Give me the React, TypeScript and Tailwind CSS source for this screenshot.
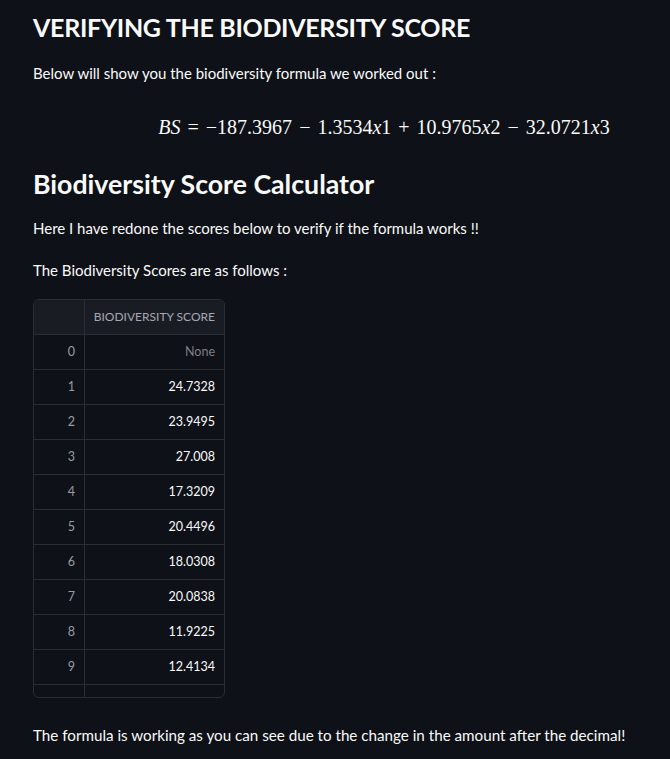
const scores: { idx: number; value: string }[] = [
  { idx: 0, value: 'None' },
  { idx: 1, value: '24.7328' },
  { idx: 2, value: '23.9495' },
  { idx: 3, value: '27.008' },
  { idx: 4, value: '17.3209' },
  { idx: 5, value: '20.4496' },
  { idx: 6, value: '18.0308' },
  { idx: 7, value: '20.0838' },
  { idx: 8, value: '11.9225' },
  { idx: 9, value: '12.4134' },
];

function Op({ children }: { children: string }) {
  return <span className="mx-[7px]">{children}</span>;
}

function Formula() {
  return (
    <div className="flex justify-center pl-[31px] text-[20px] leading-[28px] text-[#fafafa] font-['Liberation_Serif',serif]">
      <span className="whitespace-nowrap">
        <i>BS</i>
        <Op>=</Op>−187.3967<Op>−</Op>1.3534<i>x</i>1<Op>+</Op>10.9765<i>x</i>2<Op>−</Op>32.0721<i>x</i>3
      </span>
    </div>
  );
}

function ScoreTable() {
  return (
    <div className="w-[192px] rounded-md border border-[#2b2d35] overflow-hidden text-[12.5px]">
      <div className="flex h-[35px] bg-[#1a1c23] border-b border-[#2b2d35]">
        <div className="w-[51px] border-r border-[#2b2d35]" />
        <div className="flex-1 flex items-center justify-end pr-[9px] text-[12px] text-[#a3a8b4] whitespace-nowrap">
          BIODIVERSITY SCORE
        </div>
      </div>
      {scores.map((row) => (
        <div key={row.idx} className="flex h-[35px] border-b border-[#2b2d35]">
          <div className="w-[51px] border-r border-[#2b2d35] flex items-center justify-end pr-[9px] text-[#9a9ca3]">
            {row.idx}
          </div>
          <div
            className={
              'flex-1 flex items-center justify-end pr-[9px] ' +
              (row.value === 'None' ? 'text-[#7d7f86]' : 'text-[#fafafa]')
            }
          >
            {row.value}
          </div>
        </div>
      ))}
      <div className="flex h-[12px]">
        <div className="w-[51px] border-r border-[#2b2d35]" />
      </div>
    </div>
  );
}

export default function App() {
  return (
    <div className="min-h-[759px] w-full overflow-hidden bg-[#0e1117] text-[#fafafa] font-['Lato',sans-serif]">
      <div className="w-[704px] pl-[33px] pt-[10px] flex flex-col">
        <h1 className="text-[25px] leading-[34px] font-bold tracking-[-0.3px]">VERIFYING THE BIODIVERSITY SCORE</h1>
        <p className="mt-[17px] text-[15px] leading-[24px]">Below will show you the biodiversity formula we worked out :</p>
        <div className="mt-[28px]">
          <Formula />
        </div>
        <h2 className="mt-[27px] text-[26.7px] leading-[32px] font-bold">Biodiversity Score Calculator</h2>
        <p className="mt-[16px] text-[15px] leading-[24px]">Here I have redone the scores below to verify if the formula works !!</p>
        <p className="mt-[18px] text-[15px] leading-[24px]">The Biodiversity Scores are as follows :</p>
        <div className="mt-[17px]">
          <ScoreTable />
        </div>
        <p className="mt-[25px] text-[15.2px] leading-[24px]">
          The formula is working as you can see due to the change in the amount after the decimal!
        </p>
      </div>
    </div>
  );
}
